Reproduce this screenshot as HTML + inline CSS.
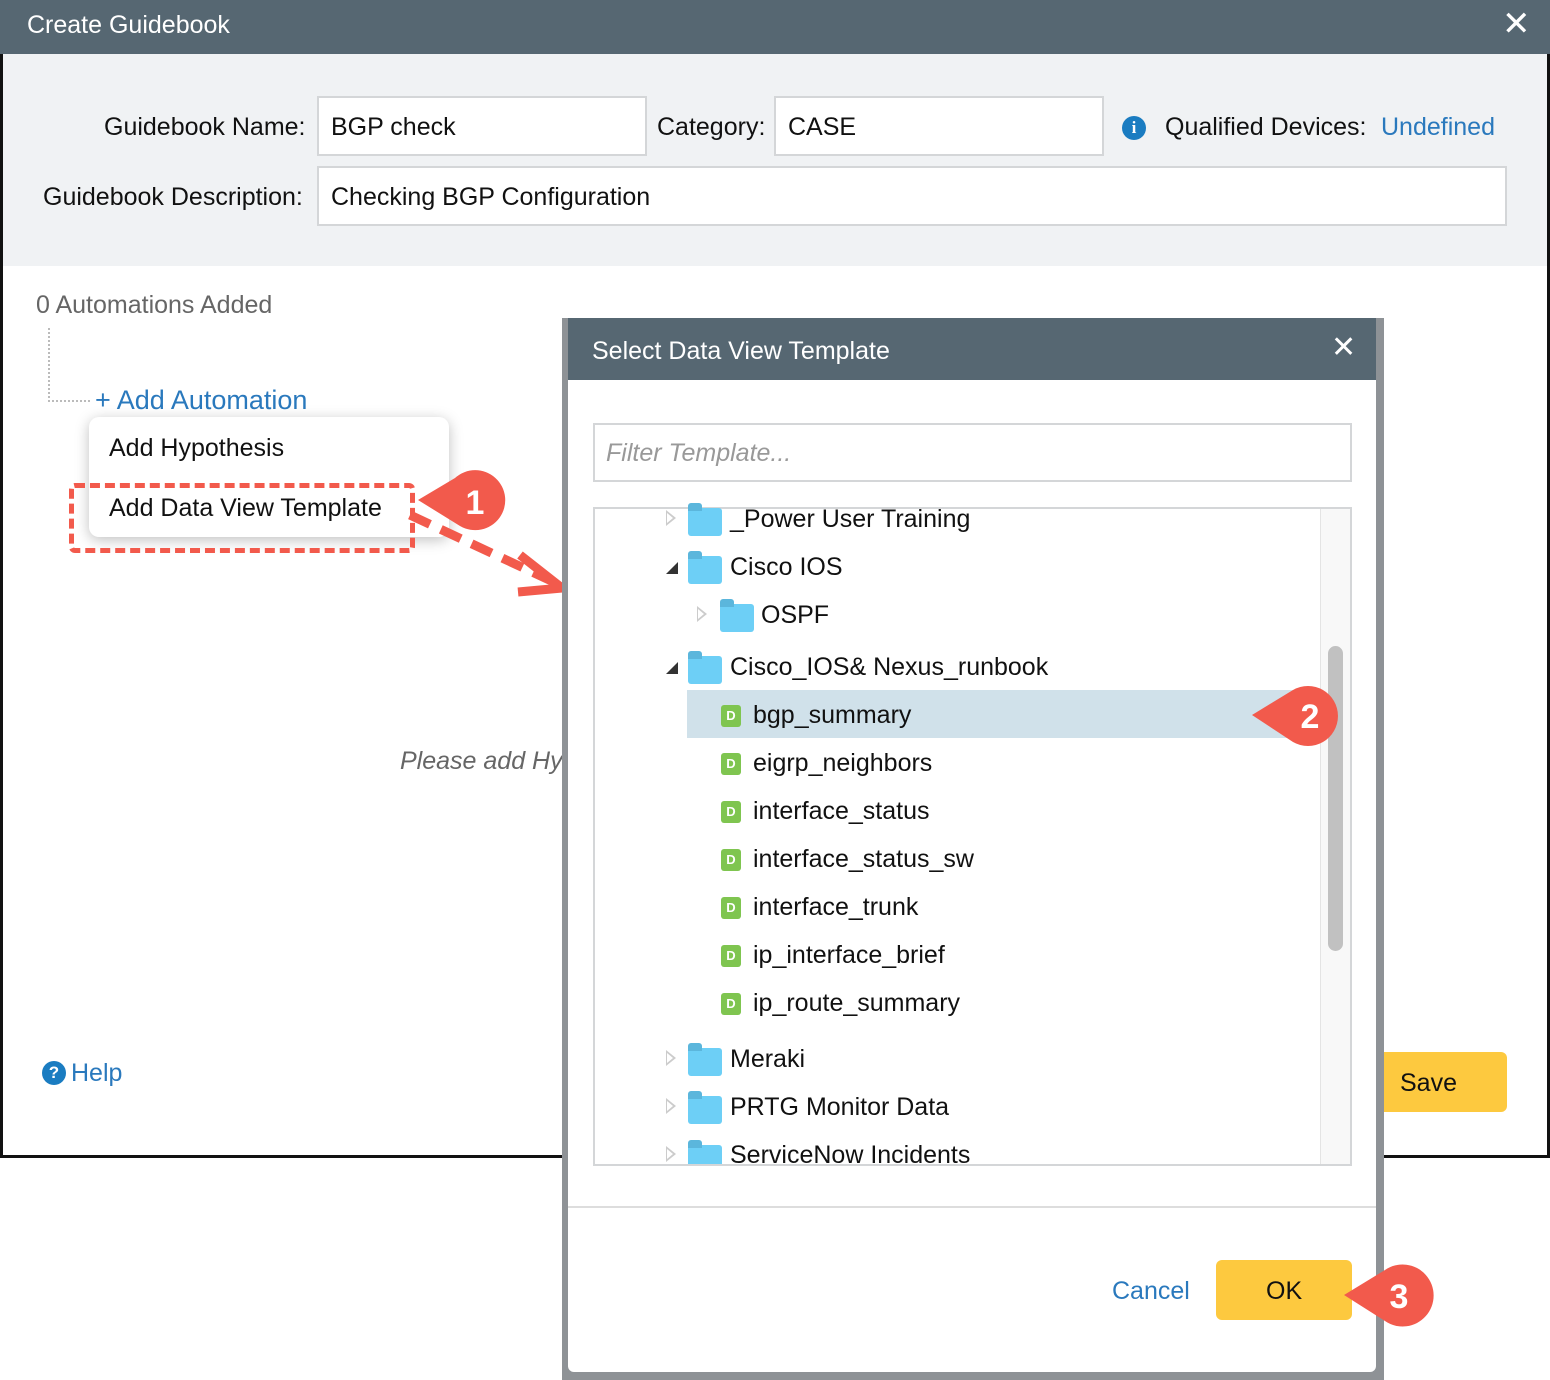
<!DOCTYPE html>
<html><head><meta charset="utf-8"><style>
*{margin:0;padding:0;box-sizing:border-box}
body{width:1550px;height:1378px;position:relative;background:#fff;font-family:"Liberation Sans",sans-serif;overflow:hidden;color:#111}
.a{position:absolute;white-space:nowrap}
.t{font-size:25px;line-height:30px}
.inp{position:absolute;background:#fff;border:2px solid #d4d6d8}
.fold{position:absolute;width:34px;height:28px;background:#6dcff6;border-radius:3px}
.fold:before{content:"";position:absolute;left:0;top:-5px;width:14px;height:8px;background:#5bb6dc;border-radius:3px 3px 0 0}
.d{position:absolute;width:20px;height:22px;background:#7fc550;border-radius:3px;color:#fff;font-size:13px;font-weight:bold;text-align:center;line-height:22px}
.tri{position:absolute;width:0;height:0;border-top:8px solid transparent;border-bottom:8px solid transparent;border-left:10px solid #ccc}
.tri:after{content:"";position:absolute;left:-9px;top:-5px;border-top:5px solid transparent;border-bottom:5px solid transparent;border-left:6px solid #fff}
.dn{position:absolute;width:0;height:0;border-left:12px solid transparent;border-bottom:12px solid #333}
</style></head><body>
<div class="a" style="left:0;top:0;width:1550px;height:1158px;border:3px solid #111;border-top:none;background:#fff"></div>
<div class="a" style="left:0;top:0;width:1550px;height:54px;background:#566772"></div>
<div class="a t" style="left:27px;top:10px;color:#fff">Create Guidebook</div>
<div class="a" style="left:1502px;top:4px;color:#fff;font-size:34px">✕</div>
<div class="a" style="left:3px;top:54px;width:1544px;height:212px;background:#f0f2f4"></div>
<div class="a t" style="left:104px;top:112px">Guidebook Name:</div>
<div class="inp" style="left:317px;top:96px;width:330px;height:60px"></div>
<div class="a t" style="left:331px;top:112px">BGP check</div>
<div class="a t" style="left:657px;top:112px">Category:</div>
<div class="inp" style="left:774px;top:96px;width:330px;height:60px"></div>
<div class="a t" style="left:788px;top:112px">CASE</div>
<div class="a" style="left:1122px;top:116px;width:24px;height:24px;border-radius:50%;background:#1a7cc1;color:#fff;font-weight:bold;font-size:17px;text-align:center;line-height:24px;font-family:'Liberation Serif',serif">i</div>
<div class="a t" style="left:1165px;top:112px">Qualified Devices:</div>
<div class="a t" style="left:1381px;top:112px;color:#2a79bd">Undefined</div>
<div class="a t" style="left:43px;top:182px">Guidebook Description:</div>
<div class="inp" style="left:317px;top:166px;width:1190px;height:60px"></div>
<div class="a t" style="left:331px;top:182px">Checking BGP Configuration</div>

<div class="a t" style="left:36px;top:290px;color:#666">0 Automations Added</div>
<div class="a" style="left:48px;top:328px;width:42px;height:74px;border-left:2px dotted #bbb;border-bottom:2px dotted #bbb"></div>
<div class="a t" style="left:95px;top:385px;color:#2a79bd;font-size:27px">+ Add Automation</div>
<div class="a" style="left:89px;top:417px;width:360px;height:120px;background:#fff;border-radius:10px;box-shadow:0 3px 14px rgba(0,0,0,.25)"></div>
<div class="a t" style="left:109px;top:433px">Add Hypothesis</div>
<div class="a t" style="left:109px;top:493px">Add Data View Template</div>
<div class="a" style="left:69px;top:483px;width:346px;height:70px;border:5px dashed #f25a4c;border-radius:6px"></div>
<div class="a t" style="left:400px;top:746px;color:#666;font-style:italic">Please add Hyp</div>
<div class="a" style="left:42px;top:1061px;width:24px;height:24px;border-radius:50%;background:#1a7cc1;color:#fff;font-weight:bold;font-size:17px;text-align:center;line-height:24px">?</div>
<div class="a t" style="left:71px;top:1058px;color:#2a79bd">Help</div>
<div class="a" style="left:1370px;top:1052px;width:137px;height:60px;background:#fdc93f;border-radius:6px"></div>
<div class="a t" style="left:1400px;top:1068px">Save</div>

<svg class="a" style="left:400px;top:460px" width="180" height="140">
<path d="M10 55 L160 125" stroke="#f25a4c" stroke-width="9" stroke-dasharray="22 12" fill="none"/>
<path d="M120 95 L162 128 L118 132" stroke="#f25a4c" stroke-width="9" fill="none"/>
<path d="M18 40 L55 18 A30 30 0 1 1 60 66 Z" fill="#f25a4c"/>
<text x="75" y="54" fill="#fff" font-size="34" font-weight="bold" font-family="Liberation Sans" text-anchor="middle">1</text>
</svg>

<div class="a" style="left:562px;top:318px;width:822px;height:1062px;background:#8e9296"></div>
<div class="a" style="left:568px;top:318px;width:808px;height:1054px;background:#fff;border-radius:0 0 6px 6px"></div>
<div class="a" style="left:568px;top:318px;width:808px;height:62px;background:#566772"></div>
<div class="a t" style="left:592px;top:336px;color:#fff">Select Data View Template</div>
<div class="a" style="left:1331px;top:330px;color:#fff;font-size:30px">✕</div>
<div class="inp" style="left:593px;top:423px;width:759px;height:59px"></div>
<div class="a t" style="left:606px;top:438px;color:#999;font-style:italic">Filter Template...</div>
<div class="inp" style="left:593px;top:507px;width:759px;height:659px;overflow:hidden"></div>
<div class="a" style="left:1320px;top:509px;width:30px;height:655px;background:#f8f8f8;border-left:1px solid #e4e4e4"></div>
<div class="a" style="left:1328px;top:646px;width:15px;height:305px;background:#c1c1c1;border-radius:8px"></div>
<div class="a" style="left:687px;top:690px;width:633px;height:48px;background:#d0e1ea"></div>

<div class="tri" style="left:666px;top:510px"></div><div class="fold" style="left:688px;top:508px"></div><div class="a t" style="left:730px;top:504px">_Power User Training</div>
<div class="dn" style="left:666px;top:562px"></div><div class="fold" style="left:688px;top:556px"></div><div class="a t" style="left:730px;top:552px">Cisco IOS</div>
<div class="tri" style="left:697px;top:606px"></div><div class="fold" style="left:720px;top:604px"></div><div class="a t" style="left:761px;top:600px">OSPF</div>
<div class="dn" style="left:666px;top:662px"></div><div class="fold" style="left:688px;top:656px"></div><div class="a t" style="left:730px;top:652px">Cisco_IOS&amp; Nexus_runbook</div>
<div class="d" style="left:721px;top:705px">D</div><div class="a t" style="left:753px;top:700px">bgp_summary</div>
<div class="d" style="left:721px;top:753px">D</div><div class="a t" style="left:753px;top:748px">eigrp_neighbors</div>
<div class="d" style="left:721px;top:801px">D</div><div class="a t" style="left:753px;top:796px">interface_status</div>
<div class="d" style="left:721px;top:849px">D</div><div class="a t" style="left:753px;top:844px">interface_status_sw</div>
<div class="d" style="left:721px;top:897px">D</div><div class="a t" style="left:753px;top:892px">interface_trunk</div>
<div class="d" style="left:721px;top:945px">D</div><div class="a t" style="left:753px;top:940px">ip_interface_brief</div>
<div class="d" style="left:721px;top:993px">D</div><div class="a t" style="left:753px;top:988px">ip_route_summary</div>
<div class="tri" style="left:666px;top:1050px"></div><div class="fold" style="left:688px;top:1048px"></div><div class="a t" style="left:730px;top:1044px">Meraki</div>
<div class="tri" style="left:666px;top:1098px"></div><div class="fold" style="left:688px;top:1096px"></div><div class="a t" style="left:730px;top:1092px">PRTG Monitor Data</div>
<div class="a" style="left:600px;top:1140px;width:715px;height:24px;overflow:hidden">
<div class="tri" style="left:66px;top:6px"></div><div class="fold" style="left:88px;top:5px"></div><div class="a t" style="left:130px;top:0px">ServiceNow Incidents</div></div>

<div class="a" style="left:568px;top:1206px;width:808px;height:2px;background:#ddd"></div>
<div class="a t" style="left:1112px;top:1276px;color:#2a79bd">Cancel</div>
<div class="a" style="left:1216px;top:1260px;width:136px;height:60px;background:#fdc93f;border-radius:6px"></div>
<div class="a t" style="left:1266px;top:1276px">OK</div>

<svg class="a" style="left:1248px;top:684px" width="100" height="64">
<path d="M4 31 L45 6 A30 30 0 1 1 45 58 Z" fill="#f25a4c"/>
<text x="62" y="44" fill="#fff" font-size="34" font-weight="bold" font-family="Liberation Sans" text-anchor="middle">2</text>
</svg>
<svg class="a" style="left:1340px;top:1262px" width="100" height="66">
<path d="M4 33 L45 8 A31 31 0 1 1 45 59 Z" fill="#f25a4c"/>
<text x="59" y="46" fill="#fff" font-size="34" font-weight="bold" font-family="Liberation Sans" text-anchor="middle">3</text>
</svg>
</body></html>
